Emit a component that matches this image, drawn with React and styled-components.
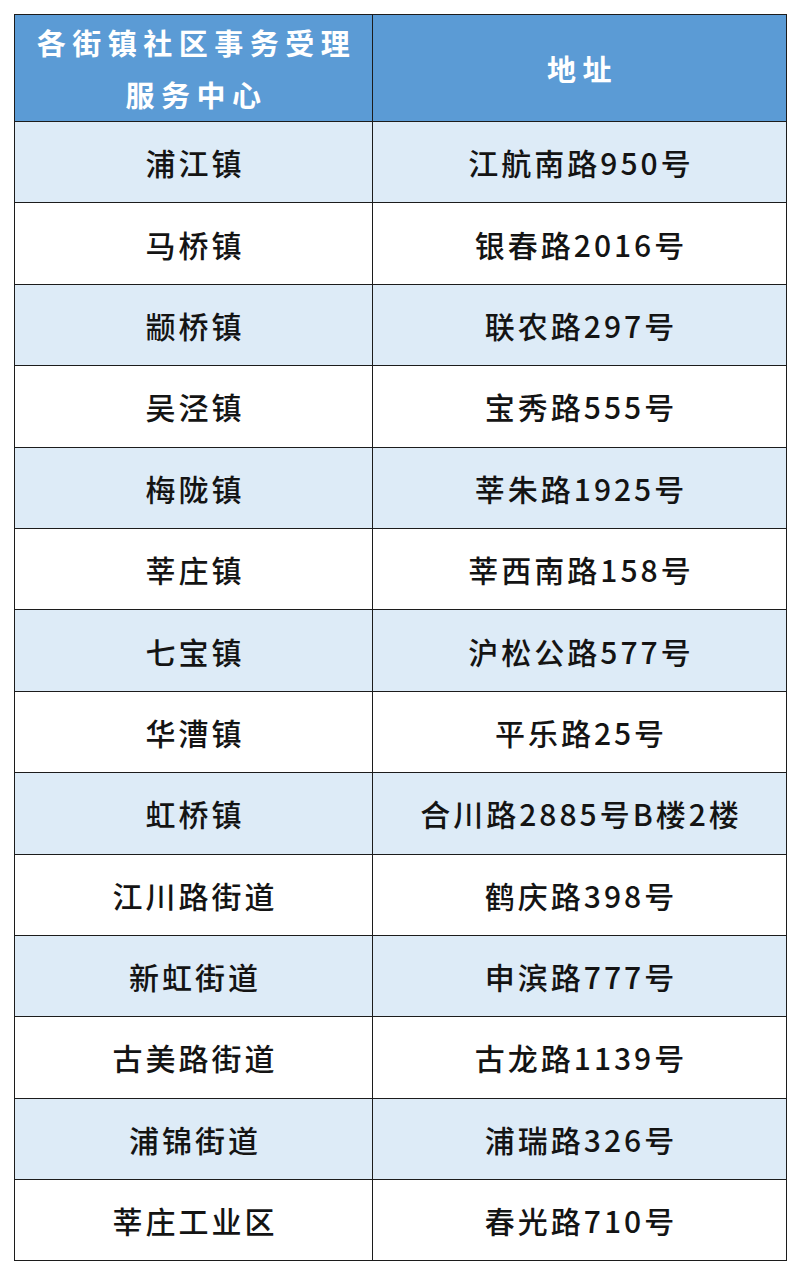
import React from "react"
import styled, { createGlobalStyle } from "styled-components"

const rows = [
  ["浦江镇", "江航南路950号"],
  ["马桥镇", "银春路2016号"],
  ["颛桥镇", "联农路297号"],
  ["吴泾镇", "宝秀路555号"],
  ["梅陇镇", "莘朱路1925号"],
  ["莘庄镇", "莘西南路158号"],
  ["七宝镇", "沪松公路577号"],
  ["华漕镇", "平乐路25号"],
  ["虹桥镇", "合川路2885号B楼2楼"],
  ["江川路街道", "鹤庆路398号"],
  ["新虹街道", "申滨路777号"],
  ["古美路街道", "古龙路1139号"],
  ["浦锦街道", "浦瑞路326号"],
  ["莘庄工业区", "春光路710号"],
]

const App = () => (
  <>
    <GlobalStyle />
    <Page>
      <Table>
        <colgroup>
          <col style={{ width: 358 }} />
          <col style={{ width: 414 }} />
        </colgroup>
        <thead>
          <tr>
            <HeadCell>
              各街镇社区事务受理
              <br />
              服务中心
            </HeadCell>
            <HeadCell>地址</HeadCell>
          </tr>
        </thead>
        <tbody>
          {rows.map(([name, addr], i) => (
            <Row key={name} $shaded={i % 2 === 0}>
              <Cell>{name}</Cell>
              <Cell>{addr}</Cell>
            </Row>
          ))}
        </tbody>
      </Table>
    </Page>
  </>
)

const GlobalStyle = createGlobalStyle`
  html, body {
    margin: 0;
    padding: 0;
    background: #ffffff;
  }
`

const Page = styled.div`
  padding: 14px;
  font-family: "Noto Sans CJK SC", "Noto Sans", sans-serif;
`

const Table = styled.table`
  width: 772px;
  border-collapse: collapse;
  table-layout: fixed;
  border: 1.5px solid #1c1c1c;
`

const HeadCell = styled.th`
  height: 106px;
  padding: 0 0 0 6px;
  background-color: #5b9bd5;
  color: #ffffff;
  font-size: 29px;
  font-weight: 700;
  line-height: 52px;
  letter-spacing: 6.5px;
  text-align: center;
  border: 1px solid #1c1c1c;
`

const Row = styled.tr`
  background-color: ${(p) => (p.$shaded ? "#ddebf7" : "#ffffff")};
`

const Cell = styled.td`
  height: 80.4px;
  padding: 0 0 0 3px;
  color: #141414;
  font-size: 30px;
  font-weight: 500;
  letter-spacing: 3px;
  text-align: center;
  border: 1px solid #1c1c1c;
`

export default App
